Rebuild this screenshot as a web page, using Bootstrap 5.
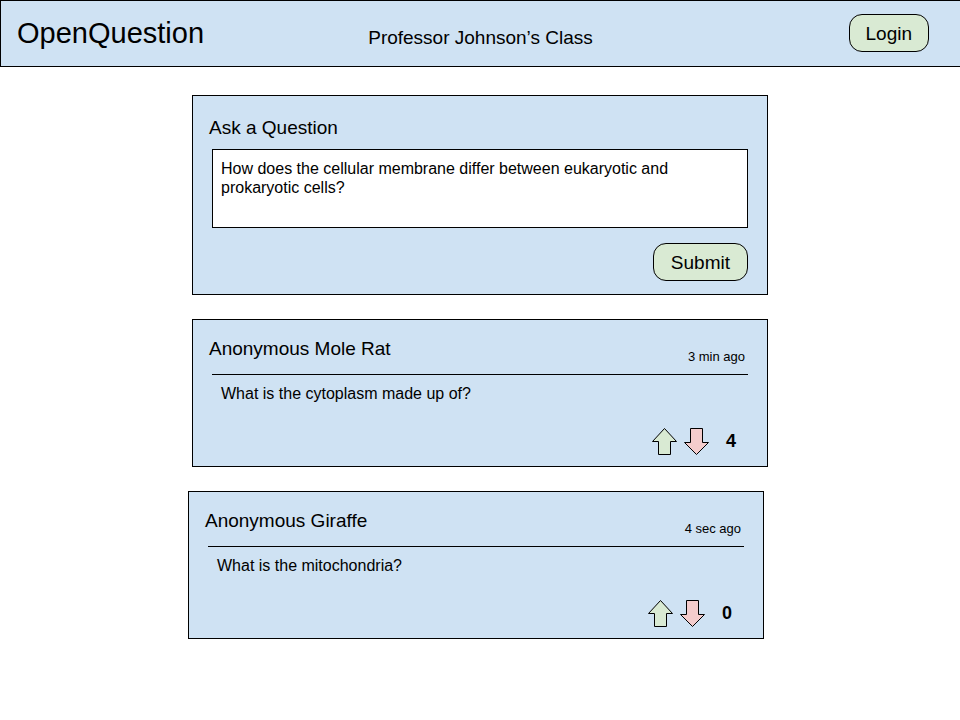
<!DOCTYPE html>
<html lang="en">
<head>
<meta charset="utf-8">
<meta name="viewport" content="width=device-width, initial-scale=1">
<title>OpenQuestion</title>
<link href="https://cdn.jsdelivr.net/npm/bootstrap@5.3.0/dist/css/bootstrap.min.css" rel="stylesheet">
<style>
  body { font-family: "Liberation Sans", Arial, sans-serif; font-size: 16px; line-height: 19px; color: #000; background: #fff; }
  .topbar { display: grid; grid-template-columns: 1fr auto 1fr; background: #cfe2f3; border: 1px solid #000; border-right: 0; padding: 13px 16px 14px; }
  .brand { font-size: 29px; line-height: 38px; color: #000; }
  .text-title { font-size: 19px; line-height: 24px; font-weight: 400; }
  .class-name { padding-top: 12px; }
  .login { margin-right: 15px; }
  .btn-pill { --bs-btn-font-size: 19px; --bs-btn-line-height: 24px; --bs-btn-padding-x: 16px; --bs-btn-border-radius: 13px;
    --bs-btn-color: #000; --bs-btn-bg: #d9ead3; --bs-btn-border-color: #000; --bs-btn-hover-color: #000; --bs-btn-hover-bg: #c8dfc0; --bs-btn-hover-border-color: #000;
    padding-top: 7px; padding-bottom: 5px; }
  .btn-wide { --bs-btn-padding-x: 17px; }
  .feed { padding: 28px 0; gap: 24px; }
  .panel { --bs-card-bg: #cfe2f3; --bs-card-border-color: #000; --bs-card-border-radius: 0; --bs-card-color: #000; width: 60%; min-width: 320px; }
  .ask-body { padding: 20px 19px 13px 16px; }
  .post-body { padding: 17px 19px 11px 16px; }
  .inset { margin-left: 3px; }
  .ask-text { width: auto; height: 79px; margin-top: 9px; margin-bottom: 15px; padding: 9px 8px; font-size: 16px; line-height: 19px; color: #000; border: 1px solid #000; border-radius: 0; resize: none; }
  .post-head { padding-bottom: 9px; }
  .post-head .text-title { margin-bottom: 4px; }
  .post-time { font-size: 13px; line-height: 16px; padding-right: 3px; }
  .post-text { border-top: 1px solid #000; padding: 9px 9px 25px; }
  .votes { gap: 7px; padding-right: 12px; }
  .vote { background: none; border: 0; padding: 0; line-height: 0; }
  .vote svg { width: 25px; height: 27px; display: block; }
  .vote path { stroke: #000; stroke-width: 1; }
  .vote-up { fill: #d9ead3; }
  .vote-down { fill: #f4cccc; }
  .score { font-size: 18px; line-height: 24px; padding-left: 10px; padding-bottom: 2px; }
</style>
</head>
<body>
<header class="topbar">
  <a class="brand text-decoration-none" href="#">OpenQuestion</a>
  <h1 class="text-title class-name mb-0">Professor Johnson’s Class</h1>
  <button type="button" class="btn btn-pill login ms-auto">Login</button>
</header>

<main class="feed d-flex flex-column align-items-center">
  <form class="card panel">
    <div class="card-body ask-body d-flex flex-column">
      <label class="text-title" for="question">Ask a Question</label>
      <textarea class="form-control ask-text inset" id="question">How does the cellular membrane differ between eukaryotic and prokaryotic cells?</textarea>
      <button type="submit" class="btn btn-pill btn-wide align-self-end">Submit</button>
    </div>
  </form>

  <article class="card panel">
    <div class="card-body post-body">
      <div class="post-head d-flex justify-content-between align-items-end">
        <h2 class="text-title">Anonymous Mole Rat</h2>
        <time class="post-time">3 min ago</time>
      </div>
      <p class="post-text inset mb-0">What is the cytoplasm made up of?</p>
      <div class="votes d-flex justify-content-end align-items-center">
        <button type="button" class="vote" aria-label="Vote up"><svg viewBox="0 0 25 27"><path class="vote-up" d="M.5 13.5 12.5.5l12 13h-6v13h-12v-13z"/></svg></button>
        <button type="button" class="vote" aria-label="Vote down"><svg viewBox="0 0 25 27"><path class="vote-down" d="M.5 14.5h6V.5h12v14h6l-12 12z"/></svg></button>
        <strong class="score">4</strong>
      </div>
    </div>
  </article>

  <article class="card panel me-2">
    <div class="card-body post-body">
      <div class="post-head d-flex justify-content-between align-items-end">
        <h2 class="text-title">Anonymous Giraffe</h2>
        <time class="post-time">4 sec ago</time>
      </div>
      <p class="post-text inset mb-0">What is the mitochondria?</p>
      <div class="votes d-flex justify-content-end align-items-center">
        <button type="button" class="vote" aria-label="Vote up"><svg viewBox="0 0 25 27"><path class="vote-up" d="M.5 13.5 12.5.5l12 13h-6v13h-12v-13z"/></svg></button>
        <button type="button" class="vote" aria-label="Vote down"><svg viewBox="0 0 25 27"><path class="vote-down" d="M.5 14.5h6V.5h12v14h6l-12 12z"/></svg></button>
        <strong class="score">0</strong>
      </div>
    </div>
  </article>
</main>
<script src="https://cdn.jsdelivr.net/npm/bootstrap@5.3.0/dist/js/bootstrap.bundle.min.js"></script>
</body>
</html>
